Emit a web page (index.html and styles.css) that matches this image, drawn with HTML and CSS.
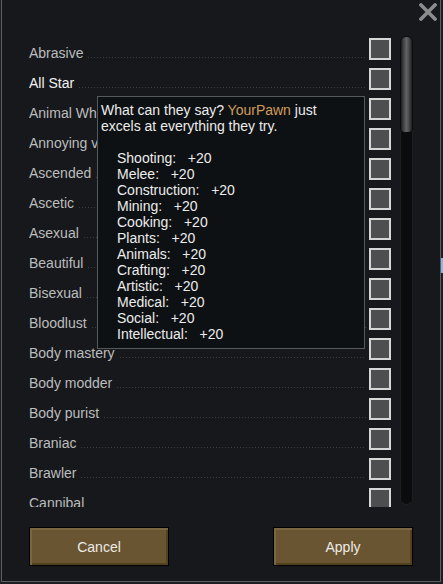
FILE: index.html
```html
<!DOCTYPE html>
<html>
<head>
<meta charset="utf-8">
<link rel="stylesheet" href="styles.css">
</head>
<body>
<div class="window">
  <button class="close" aria-label="Close">
    <svg width="18" height="18" viewBox="0 0 18 18"><path d="M2 2 L16 16 M16 2 L2 16" stroke="#8b8c8d" stroke-width="3.6" stroke-linecap="square"/></svg>
  </button>

  <div class="list-wrap">
    <div class="list">
      <div class="row"><span class="label">Abrasive</span><span class="dots"></span><span class="check"></span></div>
      <div class="row hover"><span class="label">All Star</span><span class="dots"></span><span class="check"></span></div>
      <div class="row"><span class="label">Animal Whisperer</span><span class="dots"></span><span class="check"></span></div>
      <div class="row"><span class="label">Annoying voice</span><span class="dots"></span><span class="check"></span></div>
      <div class="row"><span class="label">Ascended</span><span class="dots"></span><span class="check"></span></div>
      <div class="row"><span class="label">Ascetic</span><span class="dots"></span><span class="check"></span></div>
      <div class="row"><span class="label">Asexual</span><span class="dots"></span><span class="check"></span></div>
      <div class="row"><span class="label">Beautiful</span><span class="dots"></span><span class="check"></span></div>
      <div class="row"><span class="label">Bisexual</span><span class="dots"></span><span class="check"></span></div>
      <div class="row"><span class="label">Bloodlust</span><span class="dots"></span><span class="check"></span></div>
      <div class="row"><span class="label">Body mastery</span><span class="dots"></span><span class="check"></span></div>
      <div class="row"><span class="label">Body modder</span><span class="dots"></span><span class="check"></span></div>
      <div class="row"><span class="label">Body purist</span><span class="dots"></span><span class="check"></span></div>
      <div class="row"><span class="label">Braniac</span><span class="dots"></span><span class="check"></span></div>
      <div class="row"><span class="label">Brawler</span><span class="dots"></span><span class="check"></span></div>
      <div class="row"><span class="label">Cannibal</span><span class="dots"></span><span class="check"></span></div>
    </div>
    <div class="scrollbar"><div class="thumb"></div></div>
  </div>

  <div class="buttons">
    <button class="btn">Cancel</button>
    <button class="btn">Apply</button>
  </div>

  <div class="tooltip">
    <p class="intro">What can they say? <span class="pawn">YourPawn</span> just excels at everything they try.</p>
    <p class="blank">&nbsp;</p>
    <ul class="stats">
      <li>Shooting:   +20</li>
      <li>Melee:   +20</li>
      <li>Construction:   +20</li>
      <li>Mining:   +20</li>
      <li>Cooking:   +20</li>
      <li>Plants:   +20</li>
      <li>Animals:   +20</li>
      <li>Crafting:   +20</li>
      <li>Artistic:   +20</li>
      <li>Medical:   +20</li>
      <li>Social:   +20</li>
      <li>Intellectual:   +20</li>
    </ul>
  </div>
</div>
<div class="edge-tab"></div>
</body>
</html>
```

FILE: styles.css
```css
* { box-sizing: border-box; }

html, body {
  margin: 0;
  padding: 0;
  background: #1c1e21;
  font-family: "Liberation Sans", Arial, sans-serif;
  font-size: 14px;
  overflow: hidden;
}

.window {
  position: relative;
  margin-left: 1px;
  width: 440px;
  height: 582px;
  background: #16181b;
  border: 1px solid #5d5f62;
  border-top: none;
  padding: 38px 0 0 27px;
  display: flex;
  flex-direction: column;
}

.close {
  position: absolute;
  top: 3px;
  right: 3px;
  width: 18px;
  height: 18px;
  padding: 0;
  border: none;
  background: none;
  display: flex;
}

.list-wrap {
  display: flex;
  height: 469px;
}

.list {
  width: 362px;
  height: 469px;
  overflow: hidden;
  display: flex;
  flex-direction: column;
}

.row {
  flex: 0 0 30px;
  height: 30px;
  display: flex;
  align-items: flex-start;
}

.label {
  padding-top: 4px;
  line-height: 22px;
  color: #bcbdbe;
  white-space: nowrap;
}

.row.hover .label { color: #f2f2f2; }

.dots {
  flex: 1;
  height: 1px;
  margin: 19px 3px 0 5px;
  background-image: repeating-linear-gradient(to right, #3a3d41 0 1px, transparent 1px 3px);
}

.check {
  flex: 0 0 22px;
  width: 22px;
  height: 22px;
  border: 2px solid #d6d6d6;
  background: #4d4e4f;
}

.scrollbar {
  margin-left: 9px;
  margin-top: -2px;
  width: 13px;
  height: 469px;
  border-radius: 6px;
  background: #0b0c0e;
  box-shadow: inset 0 0 0 1px #1d1f22;
  position: relative;
}

.thumb {
  height: 97px;
  border-radius: 6px 6px 4px 4px;
  background: linear-gradient(to right, #1b1c1e 0%, #3d3e40 20%, #626365 50%, #3d3e40 80%, #1b1c1e 100%);
  border: 1px solid #0b0c0e;
}

.buttons {
  margin-top: 20px;
  width: 384px;
  display: flex;
  justify-content: space-between;
}

.btn {
  width: 140px;
  height: 39px;
  border: 1px solid #000;
  background: #6a5532;
  box-shadow: inset 2px 2px 0 #7a6641, inset -2px -2px 0 #54421f;
  color: #ecebe6;
  font-family: "Liberation Sans", Arial, sans-serif;
  font-size: 14px;
  padding: 0;
}

.tooltip {
  position: absolute;
  left: 95px;
  top: 96px;
  width: 268px;
  height: 253px;
  background: #0e1113;
  border: 1px solid #56595c;
  padding: 5px 3px 0 3px;
  color: #ececec;
  font-size: 14px;
  line-height: 16px;
}

.tooltip p { margin: 0; }

.tooltip .intro { width: 225px; }

.pawn { color: #d09c5c; }

.stats {
  list-style: none;
  margin: 0;
  padding: 0 0 0 16px;
}

.stats li { white-space: pre; }

.edge-tab {
  position: absolute;
  left: 441px;
  top: 258px;
  width: 2px;
  height: 15px;
  background: #8fb4e6;
}
```
